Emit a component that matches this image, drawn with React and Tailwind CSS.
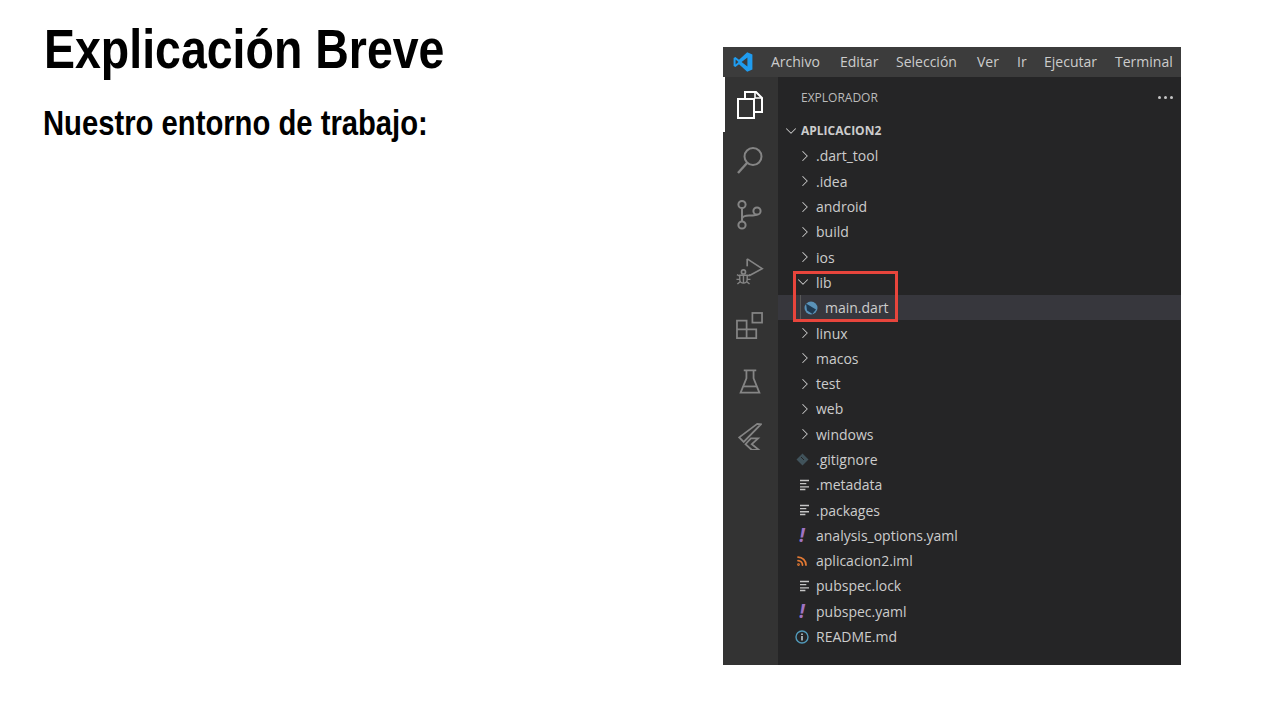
import React from 'react';
import { ChevronRight, ChevronDown, Rss } from 'lucide-react';

const menus = [
    { label: 'Archivo', w: 'w-[69px]' },
    { label: 'Editar', w: 'w-[56px]' },
    { label: 'Selección', w: 'w-[81px]' },
    { label: 'Ver', w: 'w-[40px]' },
    { label: 'Ir', w: 'w-[27px]' },
    { label: 'Ejecutar', w: 'w-[71px]' },
    { label: 'Terminal', w: 'w-[55px]' },
];

const Logo = () => (
    <svg width="20" height="20" viewBox="0 0 100 100" className="shrink-0">
        <path d="M71 99 L97 87 V13 L71 1 L30 39 L12 25 L3 30 V70 L12 75 L30 61 Z M72 28 V72 L43 50 Z M13 38 L27 50 L13 62 Z" fill="#1f9cf0" fillRule="evenodd" />
    </svg>
);

const FilesIcon = () => (
    <svg width="28" height="30" viewBox="0 0 28 30" fill="none" stroke="#ffffff" strokeWidth="2">
        <path d="M9 8V2h11l6 6v14h-8" />
        <path d="M19 2v6h7" strokeWidth="1.6" />
        <path d="M2 9h16v19H2z" />
    </svg>
);

const SearchIcon = () => (
    <svg width="28" height="30" viewBox="0 0 28 30" fill="none" stroke="#858585" strokeWidth="2">
        <circle cx="17" cy="11.5" r="8.5" />
        <path d="M11 18 2 28" strokeWidth="2.4" />
    </svg>
);

const BranchIcon = () => (
    <svg width="28" height="32" viewBox="0 0 28 32" fill="none" stroke="#858585" strokeWidth="2">
        <circle cx="6" cy="5.5" r="3.6" />
        <circle cx="6" cy="26" r="3.6" />
        <circle cx="21" cy="12" r="3.6" />
        <path d="M6 9v13.5M6 19.5c1-2.5 3-3 7-3 4.500 0 8-.5 8-1" />
    </svg>
);

const DebugIcon = () => (
    <svg width="28" height="28" viewBox="0 0 30 30" fill="none" stroke="#858585" strokeWidth="1.800">
        <path d="M12 2 28 12.500 14 20" />
        <path d="M12 2v8" />
        <circle cx="8" cy="16" r="2.200" />
        <path d="M4 19.500h8v4.500a4 4 0 0 1-8 0zM8 19.500V28M1 19l3 1.500M15 19l-3 1.500M.500 24H4M15.500 24H12M1.500 29l3-2.500M14.500 29l-3-2.500" strokeWidth="1.500" />
    </svg>
);

const ExtIcon = () => (
    <svg width="27" height="27" viewBox="0 0 28 28" fill="none" stroke="#858585" strokeWidth="1.800">
        <path d="M1 9h10v18H1zM1 18h20v9H11" />
        <rect x="17" y="1" width="10" height="10" />
    </svg>
);

const FlaskIcon = () => (
    <svg width="22" height="25" viewBox="0 0 24 28" fill="none" stroke="#858585" strokeWidth="2">
        <path d="M5 1.500h14M8 1.500v9L1.500 26.500h21L16 10.500v-9" />
        <path d="M4.500 19.500h15" />
    </svg>
);

const FlutterIcon = () => (
    <svg width="24" height="27" viewBox="0 0 26 30" fill="none" stroke="#858585" strokeWidth="2" strokeLinejoin="miter">
        <path d="M21 1 1 16l5 5L25 1.500zM14 17h8l-7 6.500 8 6.500h-8l-7-6.500z" />
    </svg>
);

const LinesIcon = () => (
    <svg width="10" height="12" viewBox="0 0 10 12" stroke="#c5c5c5" strokeWidth="1.500" className="ml-[5px]">
        <path d="M0 1h10M0 4.500h7M0 8h10M0 11h6" />
    </svg>
);

const Bang = () => <span className="w-[9px] text-center text-[19px] leading-none font-bold italic text-[#a074c4]">!</span>;

const GitIcon = () => (
    <svg width="13" height="13" viewBox="0 0 13 13">
        <path d="M6.500.500l6 6-6 6-6-6z" fill="#41535b" />
        <path d="M5 4l3 3" stroke="#252526" strokeWidth="1" />
    </svg>
);

const InfoIcon = () => (
    <svg width="14" height="14" viewBox="0 0 14 14" fill="none">
        <circle cx="7" cy="7" r="6" stroke="#519aba" strokeWidth="1.400" />
        <path d="M7 6v4.500M7 3.500v1.500" stroke="#c5d5dd" strokeWidth="1.500" />
    </svg>
);

const DartIcon = () => (
    <svg width="14" height="14" viewBox="0 0 14 14">
        <circle cx="7" cy="7" r="6.500" fill="#5a92b8" />
        <path d="M2 2.500 12 8.500 8.500 13 3 9.500z" fill="#1f3a52" />
    </svg>
);

const folders1 = ['.dart_tool', '.idea', 'android', 'build', 'ios'];
const folders2 = ['linux', 'macos', 'test', 'web', 'windows'];
const files = [
    { name: '.gitignore', icon: <GitIcon /> },
    { name: '.metadata', icon: <LinesIcon /> },
    { name: '.packages', icon: <LinesIcon /> },
    { name: 'analysis_options.yaml', icon: <Bang /> },
    { name: 'aplicacion2.iml', icon: <Rss size={12} strokeWidth={3.500} color="#e37933" /> },
    { name: 'pubspec.lock', icon: <LinesIcon /> },
    { name: 'pubspec.yaml', icon: <Bang /> },
    { name: 'README.md', icon: <InfoIcon /> },
];

const Row = ({ children, className = '' }) => (
    <div className={`flex h-[25.3px] items-center pl-[21px] text-[14px] text-[#cccccc] ${className}`}>{children}</div>
);

const Folder = ({ name, open }) => (
    <Row>
        {open
            ? <ChevronDown size={18} strokeWidth={1.400} color="#c5c5c5" className="mr-[4px] -ml-[5px] w-[18px]" />
            : <ChevronRight size={18} strokeWidth={1.400} color="#c5c5c5" className="mr-[2px] -ml-[3px]" />}
        {name}
    </Row>
);

const App = () => {
    return (
        <div className="flex h-[720px] w-[1280px] bg-white font-['Liberation_Sans',sans-serif]">
            <div className="w-[723px] pl-[43px]">
                <h1 className="mt-[16px] ml-px h-[66px] origin-left scale-x-[.83] text-[56px] leading-[66px] font-bold whitespace-nowrap text-black">Explicación Breve</h1>
                <h2 className="mt-[19px] origin-left scale-x-[.835] text-[35px] leading-[44px] font-bold whitespace-nowrap text-black">Nuestro entorno de trabajo:</h2>
            </div>

            <div className="mt-[47px] flex h-[618px] w-[458px] flex-col bg-[#252526] font-['Open_Sans',sans-serif]">
                <div className="flex h-[30px] items-center bg-[#3c3c3c] pl-[10px] text-[14px] text-[#cccccc]">
                    <Logo />
                    <div className="mb-[2px] ml-[18px] flex">
                        {menus.map(m => <span key={m.label} className={`${m.w} whitespace-nowrap`}>{m.label}</span>)}
                    </div>
                </div>
                <div className="flex flex-1">
                    <div className="flex w-[55px] flex-col items-center bg-[#333333] pr-[2px]">
                        <div className="-mr-[2px] flex h-[55.3px] w-[55px] items-center justify-center border-l-2 border-white pr-[4px]"><FilesIcon /></div>
                        <div className="flex h-[55.3px] items-center justify-center"><SearchIcon /></div>
                        <div className="flex h-[55.3px] items-center justify-center"><BranchIcon /></div>
                        <div className="flex h-[55.3px] items-center justify-center"><DebugIcon /></div>
                        <div className="flex h-[55.3px] items-center justify-center"><ExtIcon /></div>
                        <div className="flex h-[55.3px] items-center justify-center"><FlaskIcon /></div>
                        <div className="flex h-[55.3px] items-center justify-center"><FlutterIcon /></div>
                    </div>
                    <div className="relative flex-1">
                        <div className="flex h-[41px] items-center justify-between pr-[8px] pl-[23px] text-[12px] text-[#bbbbbb]">
                            <span>EXPLORADOR</span>
                            <span className="flex gap-[3px]">
                                <i className="h-[3px] w-[3px] rounded-full bg-[#c5c5c5]" />
                                <i className="h-[3px] w-[3px] rounded-full bg-[#c5c5c5]" />
                                <i className="h-[3px] w-[3px] rounded-full bg-[#c5c5c5]" />
                            </span>
                        </div>
                        <div className="flex h-[25.3px] items-center pl-[4px] text-[12px] font-bold text-[#cccccc]">
                            <ChevronDown size={18} strokeWidth={1.400} color="#c5c5c5" className="mr-px" />
                            APLICACION2
                        </div>
                        {folders1.map(f => <Folder key={f} name={f} />)}
                        <Folder name="lib" open />
                        <Row className="relative bg-[#37373d]">
                            <span className="absolute top-0 bottom-0 left-[22px] w-px bg-[#585858]" />
                            <span className="mr-[7px] ml-[5px]"><DartIcon /></span>
                            main.dart
                        </Row>
                        {folders2.map(f => <Folder key={f} name={f} />)}
                        {files.map(f => (
                            <Row key={f.name}>
                                <span className="mr-[7px] -ml-[4px] flex w-[14px] items-center justify-center">{f.icon}</span>
                                {f.name}
                            </Row>
                        ))}
                        <div className="absolute top-[194px] left-[15px] h-[51px] w-[105px] border-[3px] border-[#e8453c]" />
                    </div>
                </div>
            </div>
        </div>
    );
};

export default App;
